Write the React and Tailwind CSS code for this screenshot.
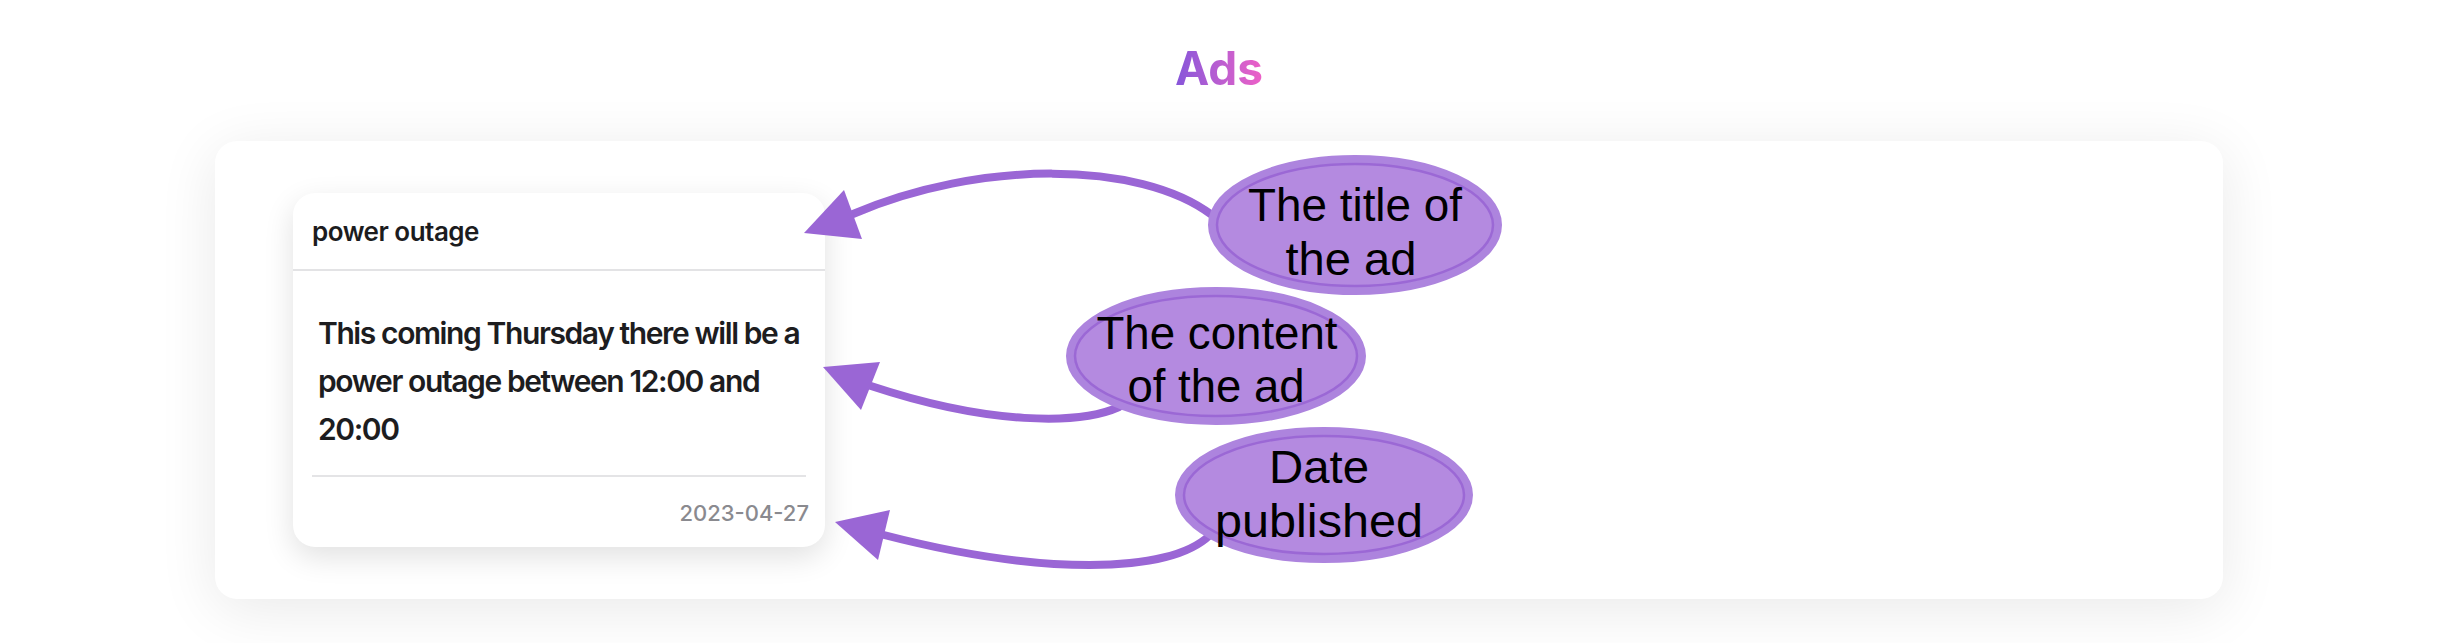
import React from "react";

const ARROW = "#9a66d5";

function Bubble({ cx, cy, rx, ry, lines }) {
    return (
        <g>
            <ellipse cx={cx} cy={cy} rx={rx} ry={ry} fill="#b48ae0" stroke="#ad84de" strokeWidth="8" />
            <ellipse cx={cx} cy={cy} rx={rx - 5} ry={ry - 5} fill="none" stroke="#9b68d5" strokeWidth="2.5" />
            {lines.map((l) => (
                <text
                    key={l.text}
                    x={l.x}
                    y={l.y}
                    textAnchor="middle"
                    textLength={l.w}
                    lengthAdjust="spacingAndGlyphs"
                    fontFamily="'Liberation Sans', Arial, sans-serif"
                    fontSize="46"
                    fill="#000"
                >
                    {l.text}
                </text>
            ))}
        </g>
    );
}

function Arrow({ d, head }) {
    return (
        <g>
            <path d={d} fill="none" stroke={ARROW} strokeWidth="8" strokeLinecap="round" />
            <polygon points={head} fill={ARROW} />
        </g>
    );
}

// annotation layer, drawn in page coordinates and shifted onto the panel
function Annotations() {
    return (
        <svg className="pointer-events-none absolute inset-0" width="2008" height="458" viewBox="0 0 2008 458">
            <g transform="translate(-216 -141)">
                <Arrow d="M1213 215 C 1140 160, 980 160, 854 214" head="805,233 845,190 863,239" />
                <Arrow d="M1120 407 C 1080 425, 990 425, 872 386" head="824,367 881,362 862,410" />
                <Arrow d="M1211 535 C 1170 575, 1040 575, 885 535" head="836,522 891,510 879,560" />
                <Bubble
                    cx={1356}
                    cy={225}
                    rx={143}
                    ry={66}
                    lines={[
                        { text: "The title of", x: 1356, y: 221, w: 214 },
                        { text: "the ad", x: 1352, y: 275, w: 131 },
                    ]}
                />
                <Bubble
                    cx={1217}
                    cy={356}
                    rx={146}
                    ry={65}
                    lines={[
                        { text: "The content", x: 1218, y: 349, w: 241 },
                        { text: "of the ad", x: 1217, y: 402, w: 177 },
                    ]}
                />
                <Bubble
                    cx={1325}
                    cy={495}
                    rx={145}
                    ry={64}
                    lines={[
                        { text: "Date", x: 1320, y: 483, w: 100 },
                        { text: "published", x: 1320, y: 537, w: 208 },
                    ]}
                />
            </g>
        </svg>
    );
}

function AdCard({ title, body, date }) {
    return (
        <div className="w-[532px] rounded-[22px] bg-white shadow-[0_10px_30px_rgba(0,0,0,0.12)]">
            <div className="flex h-[78px] items-center border-b-2 border-[#e3e3e5] px-[19px]">
                <p className="text-[26px] font-semibold tracking-[-0.5px] text-[#1c1c1e]">{title}</p>
            </div>
            <div className="px-[19px] pb-[19px] pt-[38px]">
                <p className="px-[6px] text-[30px] font-semibold leading-[48px] tracking-[-1.4px] text-[#1d1d1f]">{body}</p>
                <div className="mt-[22px] h-[2px] bg-[#e4e4e6]" />
                <p className="-mr-[3px] mt-[21px] text-right text-[22px] font-medium leading-[30px] text-[#8a8a8f]">{date}</p>
            </div>
        </div>
    );
}

export default function App() {
    return (
        <div className="min-h-screen bg-white pt-[40px] font-['Inter',sans-serif]">
            <h1 className="text-center text-[46px] font-bold leading-[56px]">
                <span className="bg-linear-to-r from-[#8655da] to-[#ee5fc6] bg-clip-text text-transparent">Ads</span>
            </h1>

            <section className="relative mx-auto mt-[45px] h-[458px] w-[2008px] rounded-[22px] bg-white shadow-[0_10px_60px_rgba(0,0,0,0.09)]">
                <div className="pl-[78px] pt-[52px]">
                    <AdCard
                        title="power outage"
                        body="This coming Thursday there will be a power outage between 12:00 and 20:00"
                        date="2023-04-27"
                    />
                </div>
                <Annotations />
            </section>
        </div>
    );
}
